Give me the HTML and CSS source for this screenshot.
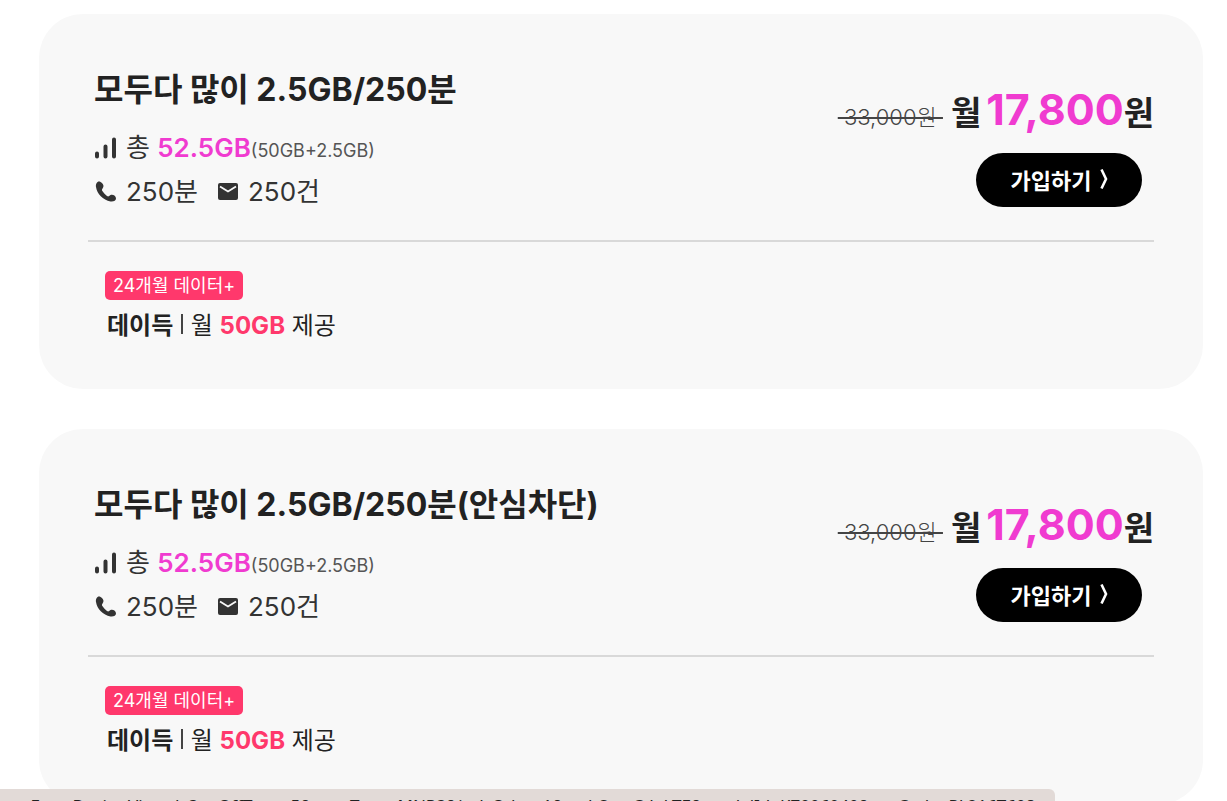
FILE: index.html
```html
<!DOCTYPE html>
<html lang="ko">
<head>
    <meta charset="UTF-8">
    <meta name="viewport" content="width=device-width, initial-scale=1.0">
    <title>모두다 많이 요금제</title>
    <link rel="stylesheet" href="styles.css">
</head>
<body>
    <main class="plans">
        <article class="plan">
            <div class="plan-top">
                <div class="plan-info">
                    <h2>모두다 많이 2.5GB/250분</h2>
                    <p class="usage">
                        <svg class="icon" viewBox="0 0 24 24"><path d="M3 16.500v3M11.500 9.500v10M20 2.500v17" fill="none" stroke="#333" stroke-width="4" stroke-linecap="round"/></svg>
                        <span>총 <strong>52.5GB</strong><small>(50GB+2.5GB)</small></span>
                    </p>
                    <p class="usage">
                        <svg class="icon" viewBox="0 0 24 24"><path d="M5 1.500C3 1.500 1.500 4 2 7C3 14 9 20 16.500 21.500C19.500 22 22 20.500 22 18.500C22 16 19 14 16.500 15C15 16 14.500 17 13 16C11 14.500 9.500 12.500 8 10.500C7.500 9 9.500 8 9.500 6C9.500 4 7 1.500 5 1.500Z" fill="#333"/></svg>
                        <span>250분</span>
                        <svg class="icon mail" viewBox="0 0 24 24"><rect x="2" y="3" width="20" height="17" rx="2" fill="#333"/><path d="M4 6.500L12 11.500L20 6.500" fill="none" stroke="#f8f8f8" stroke-width="1.800"/></svg>
                        <span>250건</span>
                    </p>
                </div>
                <div class="plan-price">
                    <p class="price"><del>&nbsp;33,000원&nbsp;</del><b>월<em>17,800</em>원</b></p>
                    <button class="join" type="button">가입하기
                        <svg class="arrow" viewBox="0 0 10 22"><path d="M2.500 1.500L7 11L2.500 20.500" fill="none" stroke="#fff" stroke-width="2.600"/></svg>
                    </button>
                </div>
            </div>
            <div class="benefit">
                <span class="tag">24개월 데이터+</span>
                <p><b>데이득</b> <i class="bar"></i> 월 <strong>50GB</strong> 제공</p>
            </div>
        </article>

        <article class="plan">
            <div class="plan-top">
                <div class="plan-info">
                    <h2>모두다 많이 2.5GB/250분(안심차단)</h2>
                    <p class="usage">
                        <svg class="icon" viewBox="0 0 24 24"><path d="M3 16.500v3M11.500 9.500v10M20 2.500v17" fill="none" stroke="#333" stroke-width="4" stroke-linecap="round"/></svg>
                        <span>총 <strong>52.5GB</strong><small>(50GB+2.5GB)</small></span>
                    </p>
                    <p class="usage">
                        <svg class="icon" viewBox="0 0 24 24"><path d="M5 1.500C3 1.500 1.500 4 2 7C3 14 9 20 16.500 21.500C19.500 22 22 20.500 22 18.500C22 16 19 14 16.500 15C15 16 14.500 17 13 16C11 14.500 9.500 12.500 8 10.500C7.500 9 9.500 8 9.500 6C9.500 4 7 1.500 5 1.500Z" fill="#333"/></svg>
                        <span>250분</span>
                        <svg class="icon mail" viewBox="0 0 24 24"><rect x="2" y="3" width="20" height="17" rx="2" fill="#333"/><path d="M4 6.500L12 11.500L20 6.500" fill="none" stroke="#f8f8f8" stroke-width="1.800"/></svg>
                        <span>250건</span>
                    </p>
                </div>
                <div class="plan-price">
                    <p class="price"><del>&nbsp;33,000원&nbsp;</del><b>월<em>17,800</em>원</b></p>
                    <button class="join" type="button">가입하기
                        <svg class="arrow" viewBox="0 0 10 22"><path d="M2.500 1.500L7 11L2.500 20.500" fill="none" stroke="#fff" stroke-width="2.600"/></svg>
                    </button>
                </div>
            </div>
            <div class="benefit">
                <span class="tag">24개월 데이터+</span>
                <p><b>데이득</b> <i class="bar"></i> 월 <strong>50GB</strong> 제공</p>
            </div>
        </article>
    </main>

    <div class="status">appFormDesignView.do?onOffType=5&amp;operType=MNP3&amp;indcOdrg=1&amp;prdtSctnCd=LTE&amp;modelId=K7006040&amp;socCode=PL216T608</div>
</body>
</html>
```

FILE: styles.css
```css
body {
    margin: 0;
    font-family: Inter, "Noto Sans CJK KR", sans-serif;
    color: #222;
    background-color: #fff;
}

h2, p {
    margin: 0;
}

.plans {
    display: flex;
    flex-direction: column;
    gap: 40px;
    padding: 14px 24px 0 39px;
}

.plan {
    padding: 50px 49px 43px;
    border-radius: 44px;
    background-color: #f8f8f8;
}

.plan-top {
    display: flex;
    justify-content: space-between;
    padding: 0 0 28px 6px;
    border-bottom: 2px solid #d9d9d9;
}

h2 {
    margin-bottom: 11px;
    font-size: 32px;
    line-height: 52px;
    font-weight: 700;
}

.usage {
    display: flex;
    align-items: center;
    font-size: 26px;
    line-height: 41px;
    color: #333;
}

.usage strong {
    color: #f03bd0;
    font-weight: 600;
}

.usage small {
    font-size: 18px;
    color: #555;
}

.icon {
    width: 24px;
    height: 24px;
    margin-right: 8px;
}

.mail {
    margin-left: 18px;
}

.plan-price {
    display: flex;
    flex-direction: column;
    align-items: flex-end;
    padding-top: 15px;
}

.price {
    display: flex;
    align-items: baseline;
    gap: 8px;
    font-size: 33px;
    line-height: 60px;
}

.price del {
    font-size: 22px;
    font-weight: 300;
    color: #444;
}

.price b {
    font-weight: 600;
}

.price em {
    margin-left: 5px;
    font-size: 43px;
    font-style: normal;
    font-weight: 700;
    color: #f03bd0;
}

.join {
    display: flex;
    justify-content: center;
    align-items: center;
    gap: 8px;
    width: 166px;
    height: 54px;
    margin: 6px 12px 0 0;
    padding: 0 4px 2px 6px;
    border: none;
    border-radius: 27px;
    background-color: #000;
    color: #fff;
    font-family: inherit;
    font-size: 22px;
    font-weight: 600;
    cursor: pointer;
}

.arrow {
    width: 10px;
    height: 22px;
}

.benefit {
    padding: 29px 17px 0;
}

.tag {
    display: inline-block;
    padding: 0 8px;
    border-radius: 5px;
    background-color: #ff386c;
    color: #fff;
    font-size: 18px;
    line-height: 29px;
}

.benefit p {
    margin-top: 6px;
    padding-left: 2px;
    font-size: 24px;
    line-height: 40px;
}

.benefit b {
    font-weight: 600;
}

.benefit strong {
    font-weight: 700;
    color: #ff386c;
}

.bar {
    display: inline-block;
    width: 2px;
    height: 20px;
    margin: 0 1px;
    background-color: #444;
}

.status {
    position: fixed;
    left: 0;
    bottom: 0;
    height: 12px;
    padding-right: 20px;
    overflow: hidden;
    border-top-right-radius: 6px;
    background-color: #e2dad7;
    font-family: "Noto Sans", sans-serif;
    font-size: 17px;
    line-height: 34px;
    white-space: nowrap;
}
```
